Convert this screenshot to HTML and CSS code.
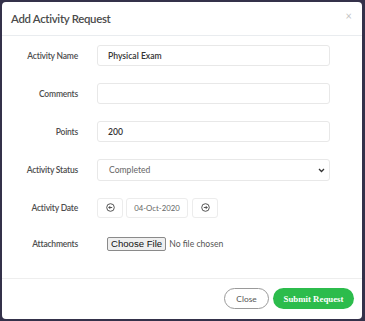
FILE: index.html
```html
<!DOCTYPE html>
<html>
<head>
<meta charset="utf-8">
<link rel="stylesheet" href="styles.css">
</head>
<body>
<div class="modal">
  <div class="modal-header">
    <h1 class="title">Add Activity Request</h1>
    <span class="close-x">&times;</span>
  </div>
  <div class="modal-body">
    <div class="row">
      <label class="label">Activity Name</label>
      <div class="control input value-strong">Physical Exam</div>
    </div>
    <div class="row">
      <label class="label">Comments</label>
      <div class="control input"></div>
    </div>
    <div class="row">
      <label class="label">Points</label>
      <div class="control input value-strong">200</div>
    </div>
    <div class="row">
      <label class="label">Activity Status</label>
      <div class="control input select">
        <span class="select-text">Completed</span>
        <svg class="chev" width="7" height="5" viewBox="0 0 7 5"><path d="M1 1 L3.5 3.5 L6 1" fill="none" stroke="#333" stroke-width="1.3"/></svg>
      </div>
    </div>
    <div class="row">
      <label class="label">Activity Date</label>
      <div class="date-group">
        <div class="date-btn">
          <svg width="9" height="9" viewBox="0 0 9 9"><circle cx="4.5" cy="4.5" r="3.8" fill="none" stroke="#444" stroke-width="0.9"/><path d="M6.2 4.5 H2.8 M4.2 3.1 L2.8 4.5 L4.2 5.9" fill="none" stroke="#444" stroke-width="0.9"/></svg>
        </div>
        <div class="date-box">04-Oct-2020</div>
        <div class="date-btn">
          <svg width="9" height="9" viewBox="0 0 9 9"><circle cx="4.5" cy="4.5" r="3.8" fill="none" stroke="#444" stroke-width="0.9"/><path d="M2.8 4.5 H6.2 M4.8 3.1 L6.2 4.5 L4.8 5.9" fill="none" stroke="#444" stroke-width="0.9"/></svg>
        </div>
      </div>
    </div>
    <div class="row row-file">
      <label class="label">Attachments</label>
      <div class="file">
        <span class="file-btn">Choose File</span>
        <span class="file-text">No file chosen</span>
      </div>
    </div>
  </div>
  <div class="modal-footer">
    <button class="btn btn-close">Close</button>
    <button class="btn btn-submit">Submit Request</button>
  </div>
</div>
</body>
</html>
```
FILE: styles.css
```css
html, body {
  margin: 0;
  padding: 0;
}
body {
  background: #34314a;
  width: 365px;
  height: 321px;
  overflow: hidden;
  font-family: Lato, "Noto Sans", sans-serif;
  padding: 2px 3px 2px 2px;
  box-sizing: border-box;
}
.modal {
  background: #fff;
  border-radius: 4px;
  height: 317px;
  display: flex;
  flex-direction: column;
}
.modal-header {
  height: 33px;
  border-bottom: 1px solid #e9ecef;
  display: flex;
  align-items: center;
  justify-content: space-between;
  padding: 0 9px 0 9px;
}
.title {
  margin: 0;
  font-size: 11.4px;
  font-weight: 600;
  color: #4a4a4a;
  letter-spacing: -0.3px;
}
.close-x {
  color: #c4c4c4;
  font-size: 11px;
  margin-top: -6px;
  margin-right: 1px;
}
.modal-body {
  flex: 1;
  padding: 9px 32px 0 10px;
  display: flex;
  flex-direction: column;
  gap: 17px;
}
.row {
  display: grid;
  grid-template-columns: 66px 1fr;
  column-gap: 19px;
  align-items: center;
  height: 21px;
}
.row-file {
  margin-top: -2px;
}
.label {
  text-align: right;
  font-size: 8.5px;
  font-weight: 600;
  color: #4d4d4d;
  letter-spacing: -0.2px;
}
.control {
  height: 21px;
  box-sizing: border-box;
  border: 1px solid #e8e8e8;
  border-radius: 3px;
  display: flex;
  align-items: center;
  font-size: 8.6px;
}
.input {
  padding-left: 10px;
}
.value-strong {
  font-weight: 600;
  color: #333;
}
.select {
  justify-content: space-between;
  padding-left: 11px;
  padding-right: 4px;
  height: 22px;
}
.select-text {
  color: #666;
}
.date-group {
  display: flex;
  gap: 3px;
  height: 20px;
}
.date-btn, .date-box {
  border: 1px solid #ececec;
  border-radius: 3px;
  box-sizing: border-box;
  height: 20px;
  display: flex;
  align-items: center;
  justify-content: center;
}
.date-btn {
  width: 26px;
}
.date-box {
  width: 62px;
  font-size: 7.8px;
  color: #666;
}
.date-box + .date-btn {
  margin-left: 1px;
}
.file {
  display: flex;
  align-items: center;
  padding-left: 10px;
}
.file-btn {
  font-family: "Liberation Sans", Arial, sans-serif;
  font-size: 9.6px;
  color: #111;
  background: #efefef;
  border: 1px solid #8a8a8a;
  border-radius: 2px;
  padding: 0 3px;
  height: 14px;
  line-height: 12px;
  box-sizing: border-box;
}
.file-text {
  font-size: 8.6px;
  color: #555;
  margin-left: 3px;
}
.modal-footer {
  height: 41px;
  border-top: 1px solid #eeeeee;
  display: flex;
  justify-content: flex-end;
  align-items: flex-start;
  padding: 9px 8px 0 0;
  gap: 4px;
  box-sizing: border-box;
}
.btn {
  height: 21px;
  border-radius: 11px;
  font-size: 8.4px;
  padding: 0;
  cursor: pointer;
}
.btn-close {
  width: 45px;
  background: #fff;
  border: 1px solid #9a9a9a;
  color: #555;
  font-family: Lato, sans-serif;
}
.btn-submit {
  width: 81px;
  background: #2cbc4c;
  border: none;
  color: #fff;
  font-weight: 700;
  font-family: "Liberation Serif", serif;
  font-size: 8.8px;
}
```
